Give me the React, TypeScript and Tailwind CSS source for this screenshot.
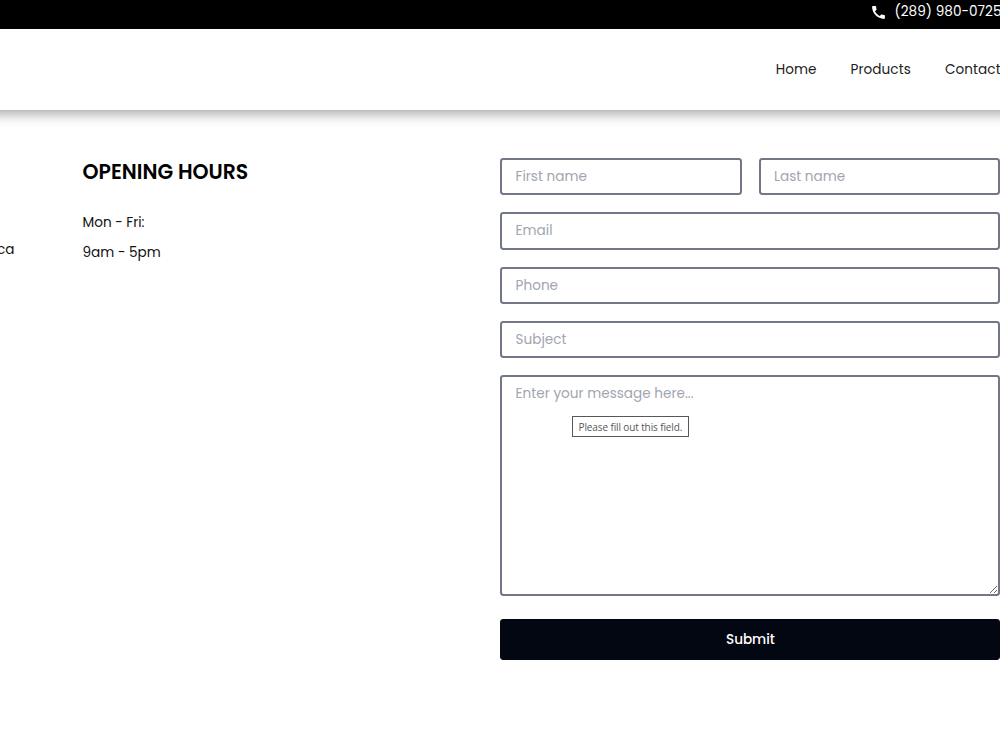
import { MdCall } from 'react-icons/md';

const inputClass =
  'block h-[37.4px] w-full min-w-0 rounded-[3.4px] border-2 border-[#717786] bg-white pt-px px-[13.2px] text-[13.6px] tracking-[0.01px] placeholder:text-[#a1a5b0] outline-none';

function TopBar() {
  return (
    <div className="flex h-[28.5px] items-start justify-end bg-black text-white">
      <a href="tel:2899800725" className="flex h-6 w-[130px] items-center whitespace-nowrap">
        <MdCall className="mr-2 h-[17px] w-[17px] shrink-0" />
        <span className="-ml-[0.5px] text-[13.6px] tracking-[0.04px]">(289) 980-0725</span>
      </a>
    </div>
  );
}

function Header() {
  return (
    <header className="-mx-5 flex h-[81.5px] items-center justify-end bg-white px-5 pt-0.5 shadow-[0_4px_12px_rgba(0,0,0,0.35)]">
      <nav className="flex w-[224.3px] items-center whitespace-nowrap text-[13.6px] tracking-[0.06px] text-[#212121]">
        <a href="#home" className="w-[74.8px] shrink-0">Home</a>
        <a href="#products" className="w-[94.5px] shrink-0">Products</a>
        <a href="#contact" className="shrink-0">Contact</a>
      </nav>
    </header>
  );
}

function ContactForm() {
  return (
    <form className="w-[500px] shrink-0">
      <div className="mb-[17px] grid grid-cols-2 gap-[17px]">
        <input className={inputClass} type="text" placeholder="First name" />
        <input className={inputClass} type="text" placeholder="Last name" />
      </div>
      <div className="flex flex-col gap-[17px]">
        <input className={inputClass} type="email" placeholder="Email" />
        <input className={inputClass} type="tel" placeholder="Phone" />
        <input className={inputClass} type="text" placeholder="Subject" />
        <div className="relative">
          <textarea
            className="block h-[220.5px] w-full rounded-[3.4px] border-2 border-[#717786] bg-white px-[13.2px] pt-[7px] pb-1.5 text-[13.6px] leading-5 tracking-[0.01px] outline-none placeholder:text-[#a1a5b0]"
            placeholder="Enter your message here..."
          />
          <span className="absolute top-[41px] left-[71.5px] flex h-[21px] w-[117px] items-center justify-center border border-[#575757] bg-white pt-px font-['Open_Sans',sans-serif] text-[10px] tracking-[-0.12px] whitespace-nowrap text-[#575757]">
            Please fill out this field.
          </span>
        </div>
      </div>
      <button
        type="submit"
        className="mt-[23px] block h-[40.8px] w-full rounded-[3.4px] bg-[#030712] pt-px text-[13.6px] font-medium tracking-[-0.05px] text-white"
      >
        Submit
      </button>
    </form>
  );
}

export default function App() {
  return (
    <div className="h-[749px] w-full overflow-hidden bg-white font-['Poppins','Inter',sans-serif]">
      <TopBar />
      <Header />
      <main className="flex pt-[47.9px] text-[13.6px] text-[#111111]">
        <div className="w-[82.5px] shrink-0 pt-[82px] leading-5">
          <span className="-ml-[3px]">ca</span>
        </div>
        <section className="w-[417.9px] shrink-0">
          <h2 className="pt-px text-[20.4px] leading-[27px] font-semibold whitespace-nowrap text-black">OPENING HOURS</h2>
          <p className="mt-[27px] leading-5">Mon - Fri:</p>
          <p className="mt-[10.4px] leading-5">9am - 5pm</p>
        </section>
        <ContactForm />
      </main>
    </div>
  );
}
